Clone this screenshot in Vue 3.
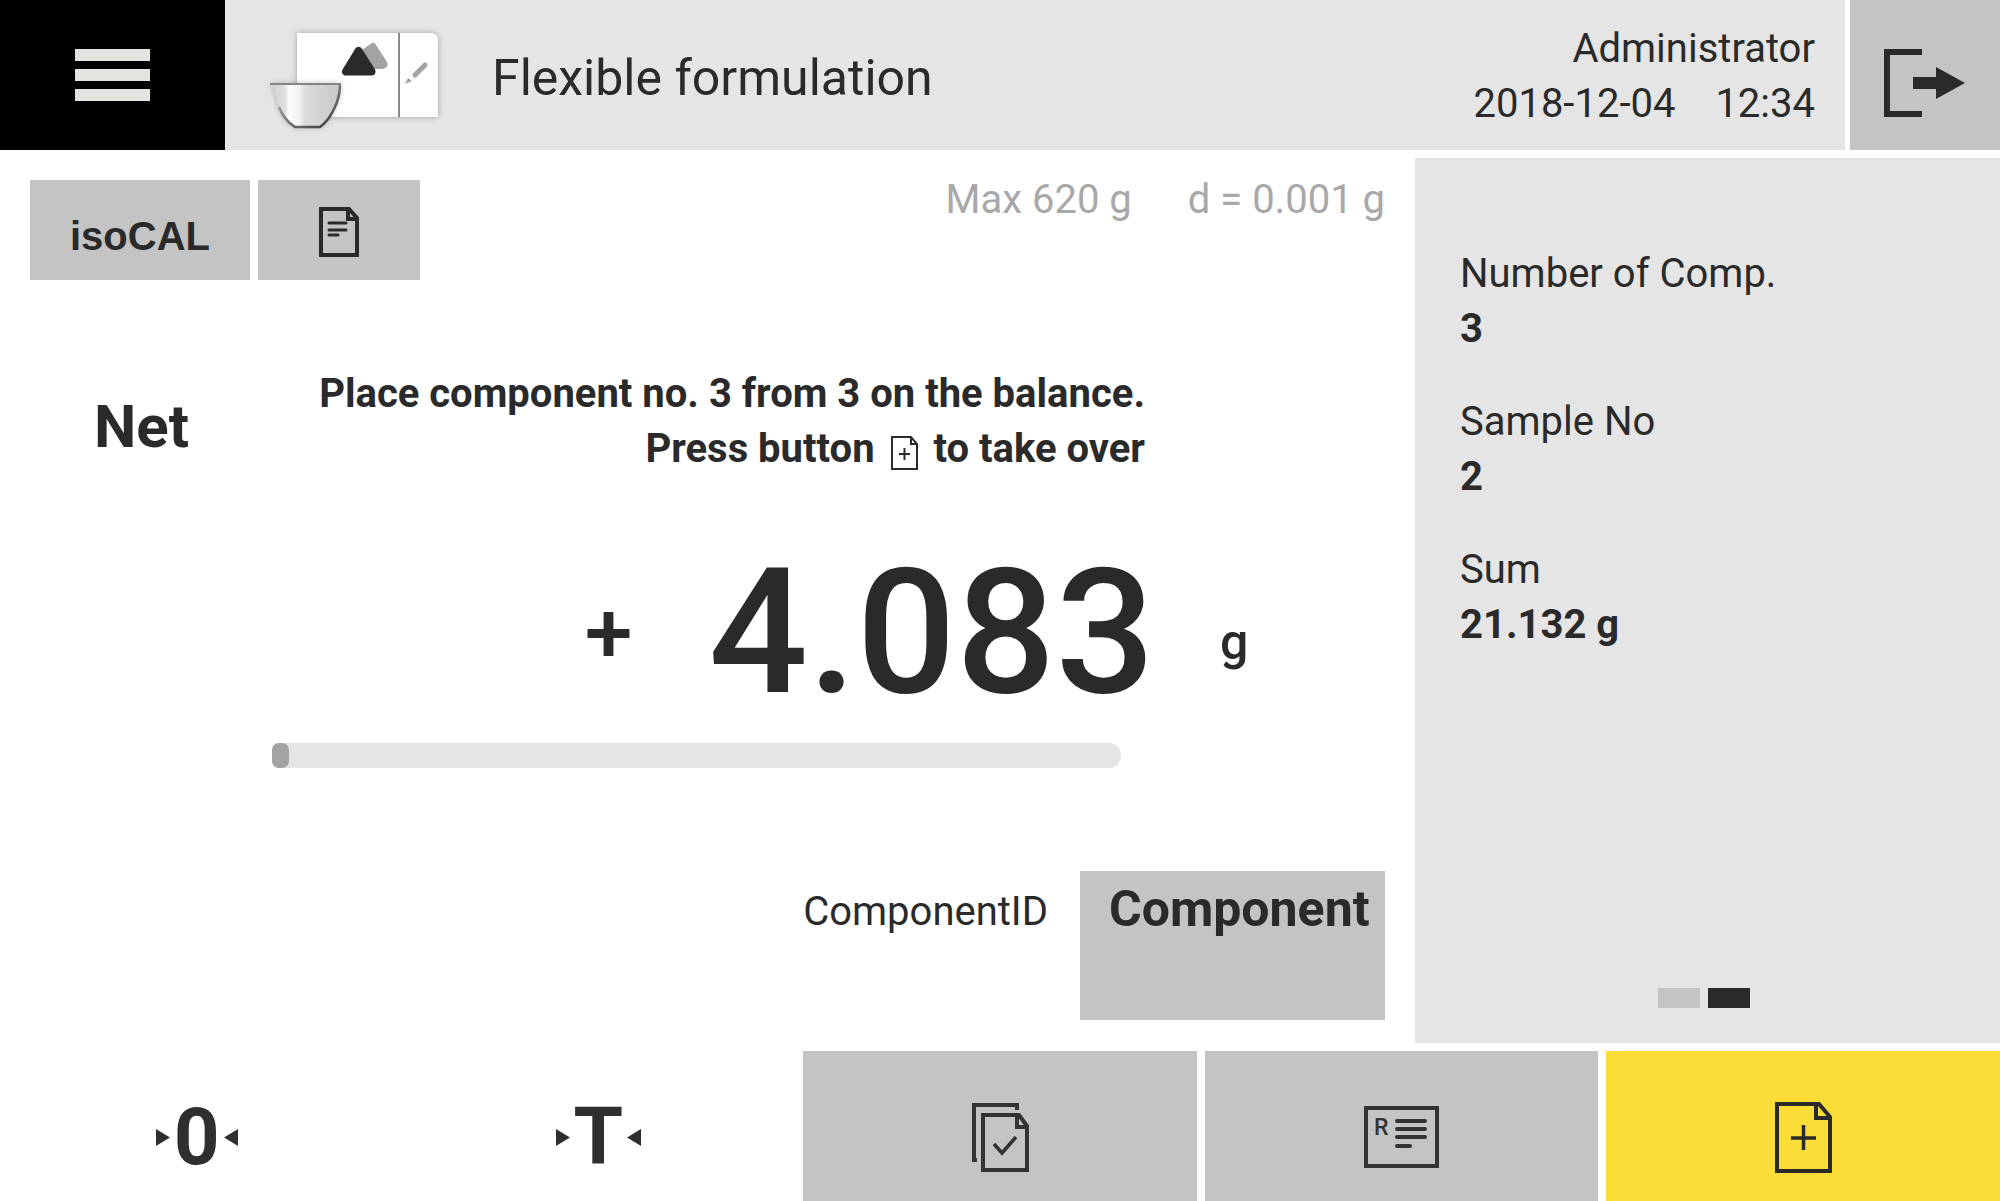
<script setup>
const stats = [
  { label: 'Number of Comp.', value: '3' },
  { label: 'Sample No', value: '2' },
  { label: 'Sum', value: '21.132 g' },
]
const fill = 2
</script>

<template>
  <div class="screen">
    <header class="topbar">
      <button class="menu" type="button" aria-label="Menu">
        <span class="bar"></span>
        <span class="bar"></span>
        <span class="bar"></span>
      </button>
      <div class="heading">
        <svg class="app-logo" viewBox="262 17 184 116" aria-hidden="true">
          <defs>
            <linearGradient id="glass" x1="0" x2="1" y1="0" y2="0">
              <stop offset="0" stop-color="#d4d4d4" />
              <stop offset="0.2" stop-color="#dedede" />
              <stop offset="0.26" stop-color="#fbfbfb" />
              <stop offset="0.42" stop-color="#f2f2f2" />
              <stop offset="0.48" stop-color="#dcdcdc" />
              <stop offset="1" stop-color="#c8c8c8" />
            </linearGradient>
            <linearGradient id="rim" x1="0" x2="1" y1="0" y2="1">
              <stop offset="0" stop-color="#bcbcbc" />
              <stop offset="0.5" stop-color="#777" />
              <stop offset="1" stop-color="#333" />
            </linearGradient>
            <filter id="soft" x="-20%" y="-20%" width="140%" height="140%">
              <feDropShadow dx="0" dy="0" stdDeviation="3" flood-color="#000" flood-opacity="0.3" />
            </filter>
          </defs>
          <path d="M297 32H430Q438 32 438 40V116H297Z" fill="#fff" filter="url(#soft)" />
          <path d="M399 32V116" stroke="#8a8a8a" stroke-width="2" />
          <path d="M373 45L384 62Q386 65 381 65H366L363 52Z" fill="#a3a3a3" stroke="#a3a3a3" stroke-width="6" stroke-linejoin="round" />
          <path d="M358.500 50L346 70.500H371.500Z" fill="#2a2a2a" stroke="#2a2a2a" stroke-width="8" stroke-linejoin="round" />
          <path d="M415 74L425 64" stroke="#a3a3a3" stroke-width="5" stroke-linecap="round" />
          <path d="M405 83L408 77L412 80Z" fill="#a3a3a3" />
          <path d="M271 83H340Q340 97 333 110Q328 120 320 126H295Q284 119 279 106Q277 98 274 88Z" fill="url(#glass)" filter="url(#soft)" />
          <path d="M340 84Q340 97 333 110Q328 120 320 126H295Q284 119 279 106" fill="none" stroke="url(#rim)" stroke-width="2.500" />
          <path d="M270 83H341" stroke="#858585" stroke-width="2" />
        </svg>
        <h1>Flexible formulation</h1>
        <div class="session">
          <div>Administrator</div>
          <div class="clock"><span>2018-12-04</span><span>12:34</span></div>
        </div>
      </div>
      <button class="logout" type="button" aria-label="Log out">
        <svg width="84" height="68" viewBox="0 0 84 68" aria-hidden="true">
          <path d="M39 3H4V65H39" fill="none" stroke="#2a2a2a" stroke-width="6" />
          <path d="M30 28H53V18L82 34L53 50V40H30Z" fill="#2a2a2a" />
        </svg>
      </button>
    </header>

    <main class="content">
      <section class="weighing">
        <div class="tools">
          <button class="tool cal" type="button">isoCAL</button>
          <button class="tool doc" type="button" aria-label="Report">
            <svg width="40" height="50" viewBox="0 0 40 50" fill="none" stroke="#2a2a2a" aria-hidden="true">
              <path d="M2 2H30L38 11V48H2Z" stroke-width="4" />
              <path d="M29 2V12H38" stroke-width="4" />
              <path d="M10 16H27M10 23H27M10 28H19" stroke-width="3" stroke-linecap="round" />
            </svg>
          </button>
          <div class="limits"><span>Max 620 g</span><span>d = 0.001 g</span></div>
        </div>

        <div class="reading">
          <h2 class="mode">Net</h2>
          <p class="message">
            Place component no. 3 from 3 on the balance.<br />
            Press button
            <svg class="inline-icon" width="27" height="34" viewBox="0 0 27 34" fill="none" stroke="#2a2a2a" aria-hidden="true">
              <path d="M1 1H20L26 8V33H1Z" stroke-width="2" />
              <path d="M20 1V8H26" stroke-width="2" />
              <path d="M13.500 12V24M8 18H19" stroke-width="2" />
            </svg>
            to take over
          </p>
          <div class="value"><span class="sign">+</span><span class="number">4.083</span></div>
          <div class="unit">g</div>
          <div class="track" role="progressbar" aria-label="Fill level" :aria-valuenow="fill" aria-valuemin="0" aria-valuemax="100">
            <div class="fill" :style="{ width: fill + '%' }"></div>
          </div>
        </div>

        <div class="component">
          <label for="component-id">ComponentID</label>
          <button id="component-id" class="component-id" type="button">Component</button>
        </div>
      </section>

      <aside class="summary">
        <dl>
          <div v-for="s in stats" :key="s.label" class="stat">
            <dt>{{ s.label }}</dt>
            <dd>{{ s.value }}</dd>
          </div>
        </dl>
        <div class="pager">
          <span class="page"></span>
          <span class="page current"></span>
        </div>
      </aside>
    </main>

    <footer class="actions">
      <button class="action plain" type="button" aria-label="Zero">
        <svg width="14" height="17" viewBox="0 0 14 17" aria-hidden="true"><path d="M0 0L14 8.500L0 17Z" fill="#2f2f2f" /></svg>
        <span>0</span>
        <svg width="14" height="17" viewBox="0 0 14 17" aria-hidden="true"><path d="M14 0L0 8.500L14 17Z" fill="#2f2f2f" /></svg>
      </button>
      <button class="action plain" type="button" aria-label="Tare">
        <svg width="14" height="17" viewBox="0 0 14 17" aria-hidden="true"><path d="M0 0L14 8.500L0 17Z" fill="#2f2f2f" /></svg>
        <span>T</span>
        <svg width="14" height="17" viewBox="0 0 14 17" aria-hidden="true"><path d="M14 0L0 8.500L14 17Z" fill="#2f2f2f" /></svg>
      </button>
      <button class="action" type="button" aria-label="Finish">
        <svg width="58" height="70" viewBox="0 0 58 70" fill="none" stroke="#333" aria-hidden="true">
          <path d="M46 8V3H3V58H6" stroke-width="4" />
          <path d="M12 13H48L56 24V68H12Z" stroke-width="4" />
          <path d="M46 13V25H56" stroke-width="4" />
          <path d="M23 42L31 51L45 35" stroke-width="3.500" />
        </svg>
      </button>
      <button class="action" type="button" aria-label="Recipe">
        <svg width="75" height="62" viewBox="0 0 75 62" aria-hidden="true">
          <path d="M2 2H73V60H2Z" fill="none" stroke="#333" stroke-width="4" />
          <text x="10" y="29" font-family="Roboto, sans-serif" font-size="23" font-weight="500" fill="#333">R</text>
          <path d="M33 15H61M33 23H61M33 31H61M33 40H46" fill="none" stroke="#333" stroke-width="4" stroke-linecap="round" />
        </svg>
      </button>
      <button class="action primary" type="button" aria-label="Take over">
        <svg width="57" height="71" viewBox="0 0 57 71" fill="none" stroke="#2a2a2a" aria-hidden="true">
          <path d="M2 2H44L55 15V69H2Z" stroke-width="4" />
          <path d="M41 2V16H55" stroke-width="4" />
          <path d="M28.500 23V48M16 36H41" stroke-width="3.500" />
        </svg>
      </button>
    </footer>
  </div>
</template>

<style>
body {
  background: #fff;
}
</style>

<style scoped>
.screen {
  display: flex;
  flex-direction: column;
  gap: 8px;
  min-height: 100vh;
  font-family: Roboto, sans-serif;
  font-size: 40px;
  line-height: 55px;
  color: #2a2a2a;
}
button {
  margin: 0;
  padding: 0;
  border: 0;
  background: #c4c4c4;
  color: inherit;
  font: inherit;
  cursor: pointer;
}
h1,
h2,
p,
dl,
dd {
  margin: 0;
}

.topbar {
  display: flex;
  height: 150px;
}
.menu {
  display: flex;
  flex-direction: column;
  align-items: center;
  justify-content: center;
  gap: 8px;
  width: 225px;
  background: #000;
}
.bar {
  width: 75px;
  height: 12px;
  background: #e3e4e0;
}
.heading {
  flex: 1;
  display: flex;
  align-items: center;
  padding: 2px 30px 0 37px;
  background: #e5e5e5;
}
.app-logo {
  width: 184px;
  height: 116px;
}
h1 {
  margin-left: 46px;
  padding-top: 4px;
  font-size: 50px;
  font-weight: 400;
  line-height: 60px;
}
.session {
  margin-left: auto;
  text-align: right;
}
.clock {
  display: flex;
  justify-content: flex-end;
  gap: 40px;
}
.logout {
  display: flex;
  align-items: center;
  justify-content: center;
  width: 150px;
  margin-left: 5px;
  padding-top: 15px;
}

.content {
  flex: 1;
  display: flex;
}
.weighing {
  flex: 1;
  display: flex;
  flex-direction: column;
  padding: 20px 30px 23px;
}
.tools {
  display: flex;
  align-items: flex-start;
  gap: 8px;
}
.tool {
  height: 100px;
  margin-top: 2px;
}
.cal {
  width: 220px;
  padding-top: 12px;
  font-family: "Liberation Sans", sans-serif;
  font-weight: 700;
}
.doc {
  display: flex;
  align-items: center;
  justify-content: center;
  width: 162px;
  padding-top: 4px;
}
.limits {
  display: flex;
  gap: 56px;
  margin-left: auto;
  line-height: 44px;
  color: #a8a8a8;
}
.reading {
  display: grid;
  grid-template-columns: 178px 1fr 230px;
  margin-top: 86px;
  padding-left: 64px;
}
.mode {
  margin-top: 26px;
  font-size: 60px;
  font-weight: 700;
  line-height: 70px;
}
.message {
  padding-right: 10px;
  font-weight: 700;
  text-align: right;
}
.inline-icon {
  margin: 0 6px;
  vertical-align: -8px;
}
.value {
  grid-column: 2;
  display: flex;
  align-items: center;
  justify-content: flex-end;
  gap: 76px;
  margin-top: 69px;
  font-weight: 500;
}
.sign {
  font-size: 86px;
  line-height: 94px;
}
.number {
  font-size: 175px;
  line-height: 176px;
}
.unit {
  align-self: center;
  margin-top: 69px;
  padding: 18px 0 0 65px;
  font-size: 50px;
  font-weight: 500;
  line-height: 60px;
}
.track {
  grid-column: 2;
  height: 25px;
  margin: 22px 34px 0 0;
  border-radius: 12px;
  border-top-left-radius: 6px;
  border-bottom-left-radius: 6px;
  background: #e5e5e5;
}
.fill {
  height: 100%;
  border-radius: 7px;
  background: #a3a3a3;
}
.component {
  display: flex;
  justify-content: flex-end;
  gap: 32px;
  margin-top: auto;
}
.component label {
  padding-top: 13px;
}
.component-id {
  display: flex;
  width: 305px;
  height: 149px;
  padding: 8px 0 0 29px;
  font-size: 50px;
  font-weight: 700;
  line-height: 60px;
}

.summary {
  display: flex;
  flex-direction: column;
  justify-content: space-between;
  width: 585px;
  box-sizing: border-box;
  padding: 88px 45px 35px;
  background: #e5e5e5;
}
.stat + .stat {
  margin-top: 38px;
}
dd {
  font-weight: 700;
}
.pager {
  display: flex;
  justify-content: center;
  gap: 8px;
  padding-right: 8px;
}
.page {
  width: 42px;
  height: 20px;
  background: #c4c4c4;
}
.current {
  background: #2a2a2a;
}

.actions {
  display: grid;
  grid-template-columns: repeat(5, 1fr);
  gap: 8px;
  height: 150px;
}
.action {
  display: flex;
  align-items: center;
  justify-content: center;
  padding-top: 22px;
}
.plain {
  gap: 4px;
  background: none;
  font-size: 80px;
  font-weight: 700;
  color: #2f2f2f;
}
.primary {
  background: #fadd37;
}
</style>
